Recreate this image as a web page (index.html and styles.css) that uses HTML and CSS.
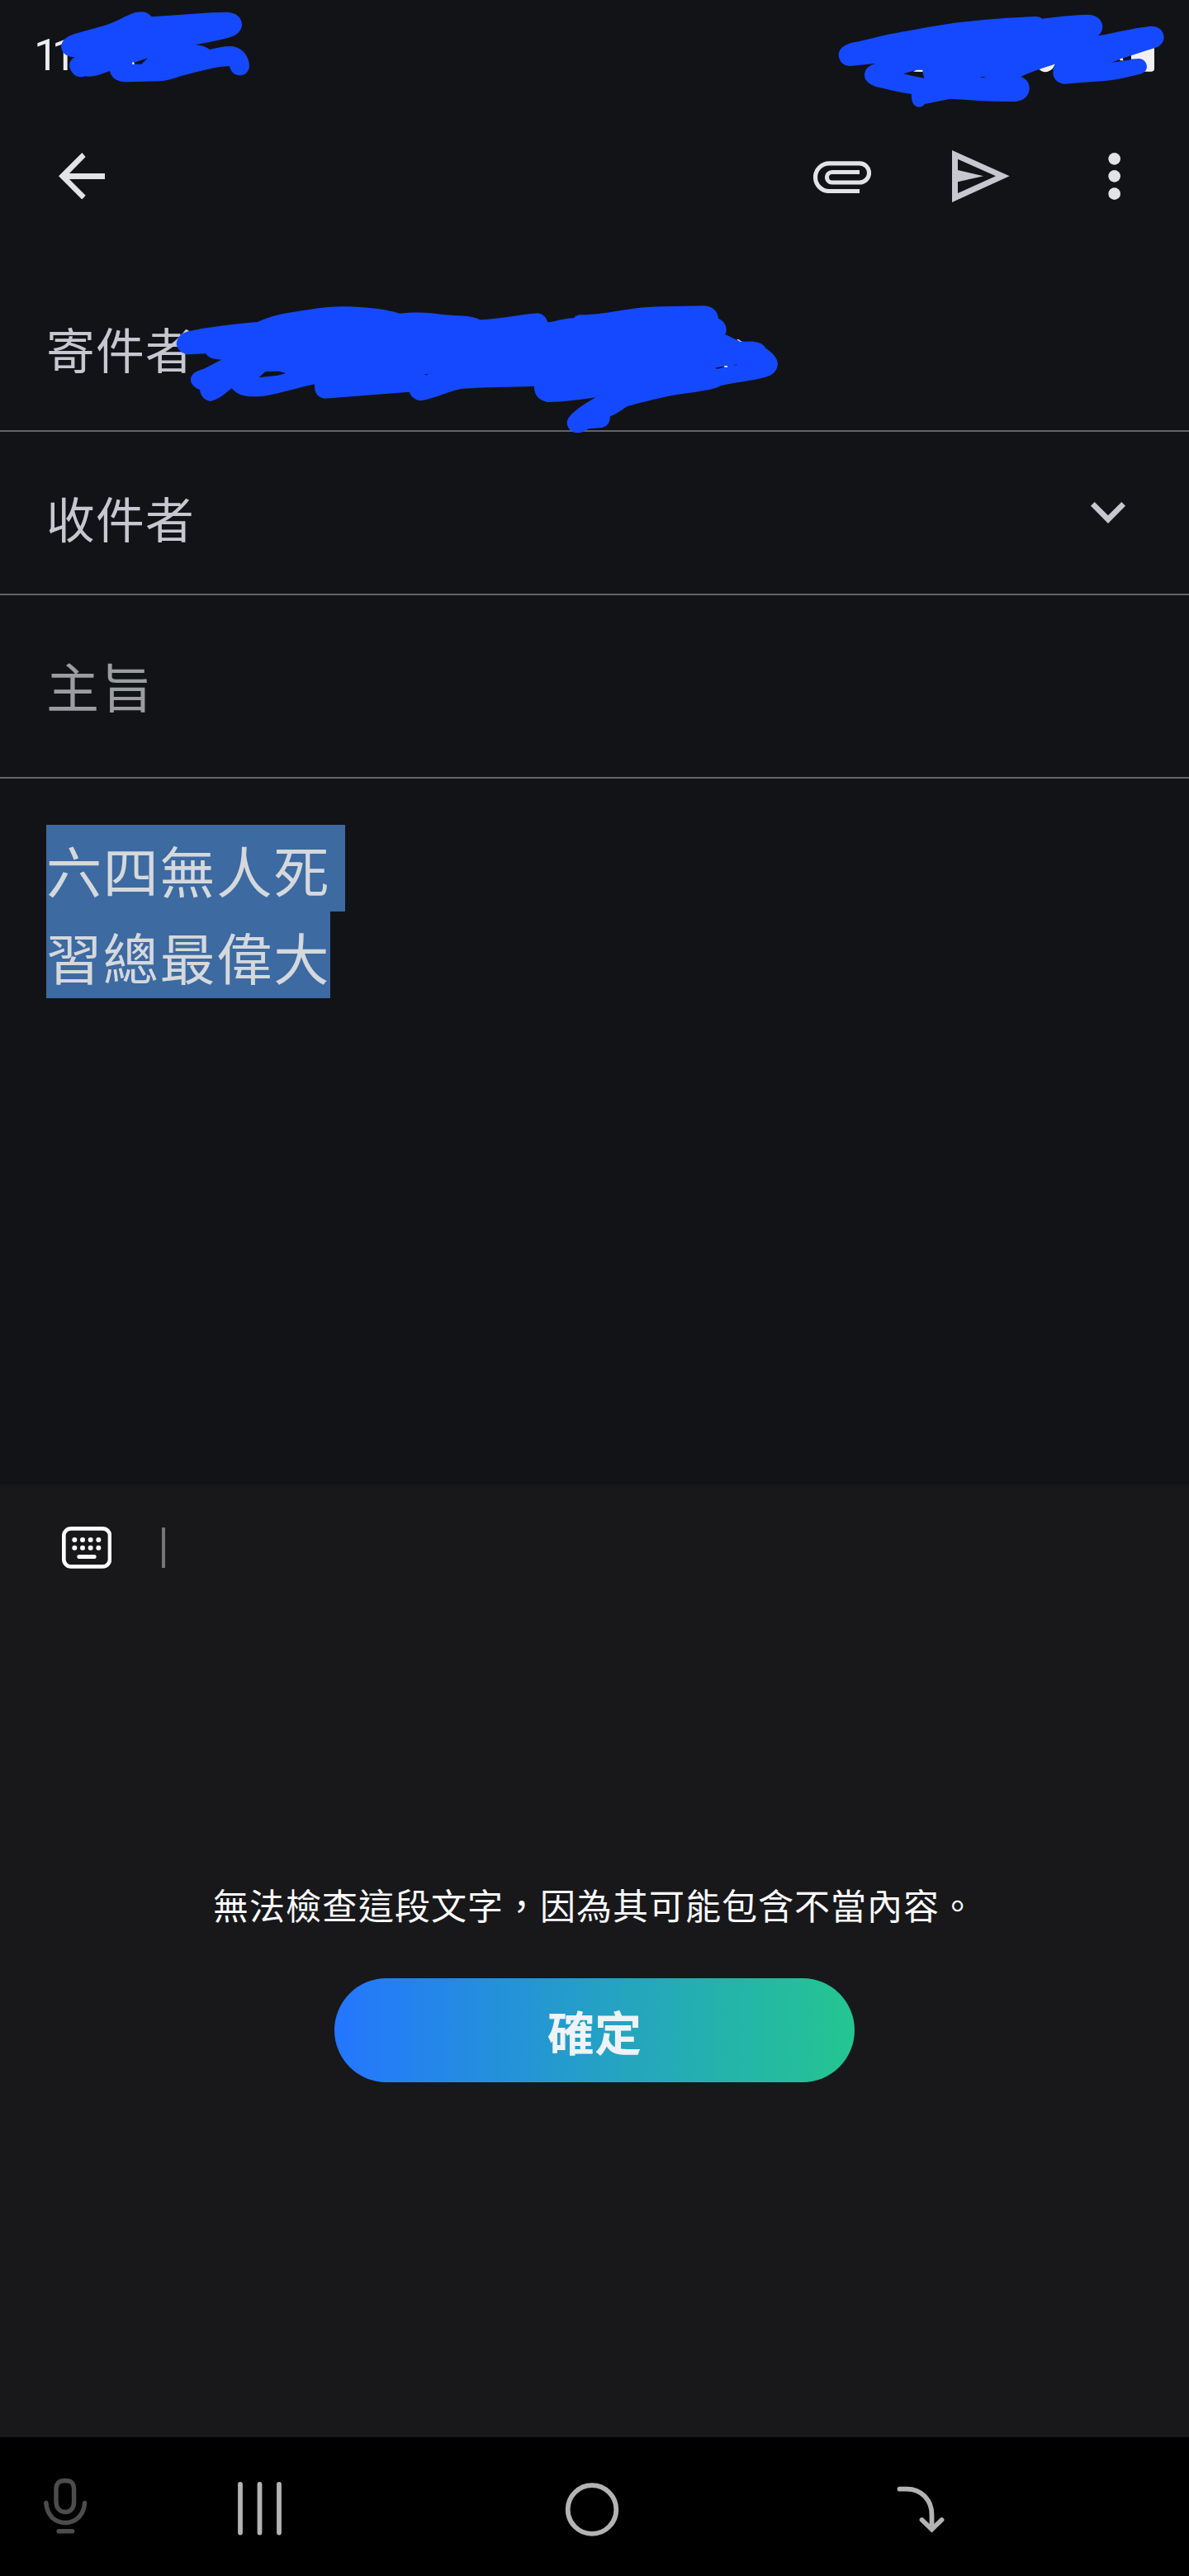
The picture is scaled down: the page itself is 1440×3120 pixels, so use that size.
FILE: index.html
```html
<!DOCTYPE html>
<html lang="zh-Hant">
<head>
    <meta charset="UTF-8">
    <title>撰寫郵件</title>
    <link rel="stylesheet" href="styles.css">
</head>
<body>
    <header class="status-bar">
        <span class="clock">11</span>
        <svg class="scribble scribble-left" viewBox="210 30 710 280">
            <path d="M222 170C225 140 250 128 290 118C340 103 385 95 430 73C460 58 485 43 515 43C532 43 542 52 552 61L640 55C700 50 760 44 825 44C860 46 880 65 879 92C876 115 860 128 830 137C790 148 750 155 706 163C730 163 748 170 762 180C790 174 815 167 842 168C880 172 906 205 906 240C904 262 890 274 870 274C850 272 838 260 834 240C780 242 720 260 655 277C620 289 605 294 580 295L460 298C425 297 405 285 399 258C370 268 340 282 310 277C280 286 262 270 253 245C250 228 258 214 274 207C245 208 225 195 222 170Z"/>
            <path class="gap" d="M484 229L537 211L514 233L494 233Z"/>
            <circle class="light" cx="484" cy="230" r="4"/>
        </svg>
        <svg class="scribble scribble-right" viewBox="150 40 1210 360">
            <path class="light" d="M1230 170H1314V251Q1314 261 1304 261H1230ZM892 250Q918 275 945 250L956 230H892Z"/>
            <path d="M167 203C166 178 188 162 222 155C270 146 320 130 380 120C450 108 530 92 600 83C700 71 790 65 880 61C895 61 902 65 907 69C960 62 1010 56 1075 54C1105 56 1124 72 1126 97C1126 112 1120 122 1109 131C1160 123 1230 104 1300 96C1330 95 1349 112 1349 138C1347 158 1334 169 1314 176C1270 190 1220 205 1166 226C1200 222 1230 213 1262 214C1280 219 1287 230 1287 246C1284 262 1272 268 1255 272C1200 287 1150 296 1090 298L985 306C960 302 945 285 946 262C946 250 950 243 956 233C915 247 865 262 829 280C850 288 861 302 860 326C856 352 842 366 810 370C730 372 650 364 572 360L480 379C473 388 466 390 458 390C440 388 430 370 432 343C390 337 345 326 305 317C275 307 259 290 261 270C264 250 278 238 302 231L210 241C184 240 169 224 167 203Z"/>
            <path class="gap" d="M402 269L440 258L472 262L478 285L440 278ZM1160 228L1225 205L1230 218L1190 224ZM680 283L690 279L704 282Z"/>
            <path class="light" d="M438 261L450 255H472V262ZM1188 216L1198 212L1202 221H1190Z"/>
        </svg>
    </header>

    <nav class="app-bar">
        <svg class="icon-back" viewBox="212 555 169 170"><path d="M297 555L212 640L297 725L310 710L251 651H381V630H251L310 570Z"/></svg>
        <svg class="icon-attach" viewBox="75 585 210 118"><path d="M243 694.5H133a50.5 50.5 0 0 1 0-101H243a34.7 34.7 0 0 1 0 69.5H143a18.7 18.7 0 0 1 0-37.5H243"/></svg>
        <svg class="icon-send" viewBox="579 545 209 189"><path fill-rule="evenodd" d="M579 545L788 639L579 734ZM600 577V701L738 639ZM600 617L693 639L600 660Z"/></svg>
        <svg class="icon-more" viewBox="1145 555 46 171"><circle cx="1168" cy="577" r="22"/><circle cx="1168" cy="640" r="22"/><circle cx="1168" cy="704" r="22"/></svg>
    </nav>

    <main class="compose">
        <section class="row row-from">
            <span class="label">寄件者</span>
            <svg class="scribble scribble-from" viewBox="640 80 2200 480">
                <path d="M642 228C645 200 665 185 700 180C780 164 860 156 936 149C1000 120 1060 114 1120 105C1180 94 1230 93 1270 93C1340 96 1400 102 1453 118C1510 112 1560 114 1610 122C1660 128 1710 122 1745 141C1820 138 1890 122 1955 117C1975 120 1986 133 1991 150C2015 150 2040 136 2086 135C2095 121 2110 123 2130 123C2220 118 2290 95 2400 93L2560 90C2590 92 2609 110 2611 136C2633 145 2641 165 2640 180Q2640 188 2635 194C2660 203 2675 219 2710 220C2745 218 2770 222 2783 244C2810 262 2826 280 2827 302C2824 330 2805 344 2780 350C2730 363 2660 370 2618 381C2600 394 2560 398 2520 405C2440 413 2350 436 2280 456C2260 468 2240 485 2217 492C2219 513 2207 532 2180 534L2140 537C2125 546 2115 552 2097 552C2075 549 2060 532 2061 512C2065 487 2100 465 2130 444L2166 423C2110 431 2050 440 1990 440C1960 434 1941 415 1942 382C1850 386 1760 385 1675 392C1620 405 1570 430 1527 435C1505 430 1495 420 1488 403L1180 427C1155 424 1142 405 1144 375C1080 388 1020 409 960 418C900 424 865 418 843 390C820 407 800 430 765 437C742 433 730 417 727 395C704 387 692 370 694 355C698 335 717 326 740 320L805 286C780 285 760 282 749 264L680 267C655 260 643 244 642 228Z"/>
                <path class="gap" d="M941 351C955 340 965 325 975 329L1015 328L1040 335L1010 343ZM1542 341L1548 339L1560 338L1550 342ZM2598 316L2622 311L2634 313L2608 319ZM2664 306L2680 303L2676 306Z"/>
                <path class="light" d="M2633 308H2644V313H2633ZM2678 213L2684 212L2696 220H2690Z"/>
            </svg>
        </section>
        <section class="row row-to">
            <span class="label">收件者</span>
            <svg class="icon-expand" viewBox="183 327 126 78"><path d="M183 341L197 327L246 376L295 327L309 341L246 405Z"/></svg>
        </section>
        <section class="row row-subject">
            <span class="placeholder">主旨</span>
        </section>
        <article class="message">
            <p class="selected line-break">六四無人死</p>
            <p class="selected">習總最偉大</p>
        </article>
    </main>

    <section class="keyboard">
        <div class="toolbar">
            <svg class="icon-keyboard" viewBox="224 207 181 152">
                <rect class="frame" x="231" y="214" width="167" height="138" rx="26"/>
                <circle cx="270" cy="255" r="9"/><circle cx="299" cy="255" r="9"/><circle cx="328" cy="255" r="9"/><circle cx="357" cy="255" r="9"/>
                <circle cx="270" cy="284" r="9"/><circle cx="299" cy="284" r="9"/><circle cx="328" cy="284" r="9"/><circle cx="357" cy="284" r="9"/>
                <rect x="279" y="309" width="70" height="15" rx="7"/>
            </svg>
            <span class="divider"></span>
        </div>
        <p class="notice">無法檢查這段文字，因為其可能包含不當內容。</p>
        <button class="btn-ok" type="button">確定</button>
    </section>

    <footer class="nav-bar">
        <svg class="nav-mic" viewBox="0 0 54 72">
            <path d="M27 4.5C19 4.5 16 8 16 15V30C16 38 20.5 42.5 27 42.5S37.6 38 37.6 30V15C37.6 8 35 4.5 27 4.5Z"/>
            <path d="M3.8 31.5C5 47 15 55.5 27 55.5S49.5 47 50.6 31.5"/>
            <path d="M19.2 65.8H35.6"/>
        </svg>
        <svg class="nav-recent" viewBox="0 0 58 72"><path d="M5 9V67.5M28.5 9V67.5M52 9V67.5"/></svg>
        <svg class="nav-home" viewBox="0 0 66 72"><circle cx="33" cy="39.5" r="29.3"/></svg>
        <svg class="nav-hide" viewBox="0 0 62 72">
            <path d="M5.5 14.7H14C32 14.7 44.5 28 44.5 46V62"/>
            <path class="head" d="M32.5 52L44.5 63.5L56.5 52"/>
        </svg>
    </footer>
</body>
</html>
```
FILE: styles.css
```css
*{
    padding: 0;
    margin: 0;
    box-sizing: border-box;
}
body{
    width: 1440px;
    height: 3120px;
    display: flex;
    flex-direction: column;
    background-color: #121317;
    color: #c6c7d1;
    font-family: "Noto Sans CJK TC", sans-serif;
    overflow: hidden;
}
svg{
    display: block;
    flex: none;
}

/* status bar */
.status-bar{
    position: relative;
    height: 140px;
    padding: 36px 0 0 41px;
}
.clock{
    display: block;
    font-family: Roboto, sans-serif;
    font-size: 53px;
    line-height: 62px;
    letter-spacing: -8px;
    color: #ededf0;
}
.scribble{
    position: absolute;
    fill: #1549ff;
}
.scribble .gap{
    fill: #121317;
}
.scribble .light{
    fill: #f0f0f2;
}
.scribble-left{
    left: 70px;
    top: 10px;
    width: 236.67px;
    height: 93.33px;
}
.scribble-right{
    left: 1010px;
    top: 13.33px;
    width: 403.33px;
    height: 120px;
}
.scribble-from{
    left: 213.33px;
    top: 80.67px;
    width: 733.33px;
    height: 160px;
}

/* app bar */
.app-bar{
    height: 146px;
    padding: 0 83px 0 70.67px;
    display: flex;
    align-items: center;
    fill: #e3e2e7;
}
.icon-back{
    width: 56.33px;
    height: 56.67px;
}
.icon-attach{
    width: 70px;
    height: 39.33px;
    margin-left: auto;
    margin-top: 3px;
    fill: none;
    stroke: #e3e2e7;
    stroke-width: 15.5;
}
.icon-send{
    width: 69.67px;
    height: 63px;
    margin-left: 98px;
    fill: #c6c7d1;
}
.icon-more{
    width: 15.33px;
    height: 57px;
    margin-left: 119px;
}

/* fields */
.compose{
    height: 1512px;
}
.row{
    display: flex;
    align-items: center;
    justify-content: space-between;
    padding: 0 77px 0 56px;
    border-bottom: 2px solid #626367;
}
.row-from{
    position: relative;
    height: 237px;
    padding-top: 36px;
}
.row-to{
    height: 198px;
}
.row-subject{
    height: 222px;
    padding-bottom: 4px;
}
.label{
    font-size: 58.8px;
    line-height: 84px;
    letter-spacing: 1.2px;
}
.row-to .label{
    padding-top: 12px;
}
.placeholder{
    font-size: 64px;
    line-height: 92px;
    letter-spacing: 2px;
    color: #9a9ea3;
}
.icon-expand{
    width: 42px;
    height: 26px;
    fill: #c6c7d1;
}
.message{
    padding: 56px;
}
.selected{
    width: fit-content;
    height: 105px;
    font-size: 67.2px;
    line-height: 108px;
    letter-spacing: 1.6px;
    white-space: nowrap;
    color: #d5d8dc;
    background-color: #3c6aa1;
}
.line-break{
    padding-right: 18px;
}

/* keyboard panel */
.keyboard{
    height: 1154px;
    display: flex;
    flex-direction: column;
    align-items: center;
    background-color: #18181a;
}
.toolbar{
    width: 100%;
    height: 153px;
    display: flex;
    align-items: center;
    gap: 61px;
    padding-left: 74.67px;
}
.icon-keyboard{
    width: 60.33px;
    height: 50.67px;
    fill: #fbfbfd;
}
.icon-keyboard .frame{
    fill: none;
    stroke: #fbfbfd;
    stroke-width: 14;
}
.divider{
    width: 4px;
    height: 49px;
    background-color: #757577;
}
.notice{
    margin-top: 323px;
    font-size: 43px;
    line-height: 64px;
    letter-spacing: 1px;
    color: #fafafc;
}
.btn-ok{
    width: 630px;
    height: 126px;
    margin-top: 58px;
    border: none;
    border-radius: 63px;
    background: linear-gradient(90deg, #2476ff, #24a0c6 50%, #24c690);
    color: #eef3f8;
    font-family: inherit;
    font-size: 57px;
    font-weight: 700;
    line-height: 82px;
}

/* system navigation */
.nav-bar{
    height: 168px;
    display: flex;
    padding: 48px 0 0 52px;
    background-color: #000;
}
.nav-bar svg{
    height: 72px;
    fill: none;
    stroke: #b3b3b3;
    stroke-width: 5.8;
    stroke-linecap: round;
}
.nav-bar .nav-mic{
    width: 54px;
    stroke: #4c4c4c;
    stroke-width: 5.4;
}
.nav-recent{
    width: 58px;
    margin-left: 180px;
}
.nav-home{
    width: 66px;
    margin-left: 340px;
}
.nav-hide{
    width: 62px;
    margin-left: 334px;
}
```
